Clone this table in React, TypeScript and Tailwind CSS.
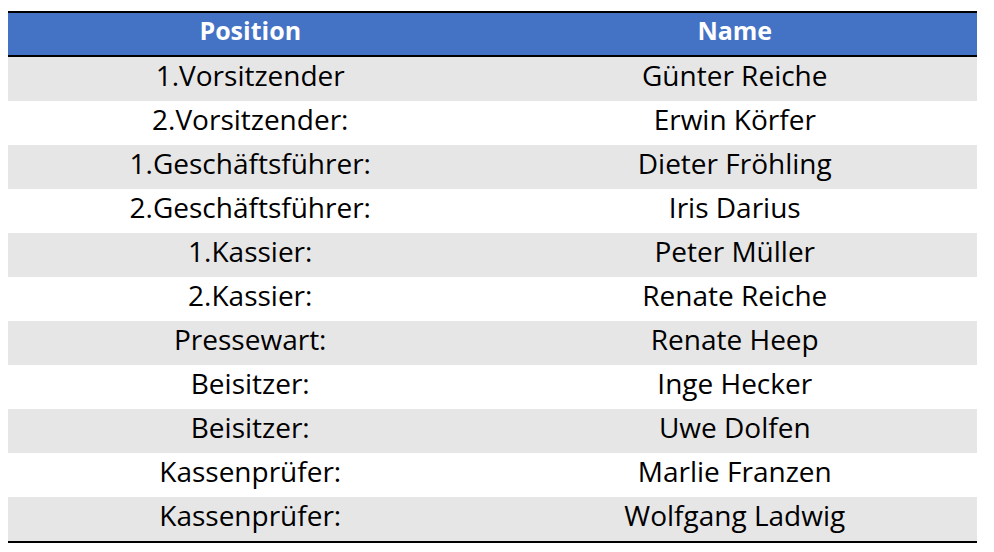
const rows: [string, string][] = [
  ['1.Vorsitzender', 'Günter Reiche'],
  ['2.Vorsitzender:', 'Erwin Körfer'],
  ['1.Geschäftsführer:', 'Dieter Fröhling'],
  ['2.Geschäftsführer:', 'Iris Darius'],
  ['1.Kassier:', 'Peter Müller'],
  ['2.Kassier:', 'Renate Reiche'],
  ['Pressewart:', 'Renate Heep'],
  ['Beisitzer:', 'Inge Hecker'],
  ['Beisitzer:', 'Uwe Dolfen'],
  ['Kassenprüfer:', 'Marlie Franzen'],
  ['Kassenprüfer:', 'Wolfgang Ladwig'],
]

const App = () => {
  return (
    <div className="bg-white w-[994px] h-[552px] pt-[11px] pl-[8px] font-['Open_Sans',sans-serif]">
      <div className="w-[969px] border-t-2 border-b-2 border-black">
        {/* Header */}
        <div className="grid grid-cols-2 h-[44px] bg-[#4472c4] border-b-2 border-black text-white text-[25px] leading-[25px] font-bold pt-[5px]">
          <div className="text-center">Position</div>
          <div className="text-center">Name</div>
        </div>

        {/* Rows */}
        {rows.map(([pos, name], i) => (
          <div
            key={i}
            className={`grid grid-cols-2 h-[44px] text-[28px] leading-[28px] pt-[4px] text-black ${i % 2 === 0 ? 'bg-[#e7e6e6]' : 'bg-white'}`}
          >
            <div className="text-center">{pos}</div>
            <div className="text-center">{name}</div>
          </div>
        ))}
      </div>
    </div>
  )
}

export default App
